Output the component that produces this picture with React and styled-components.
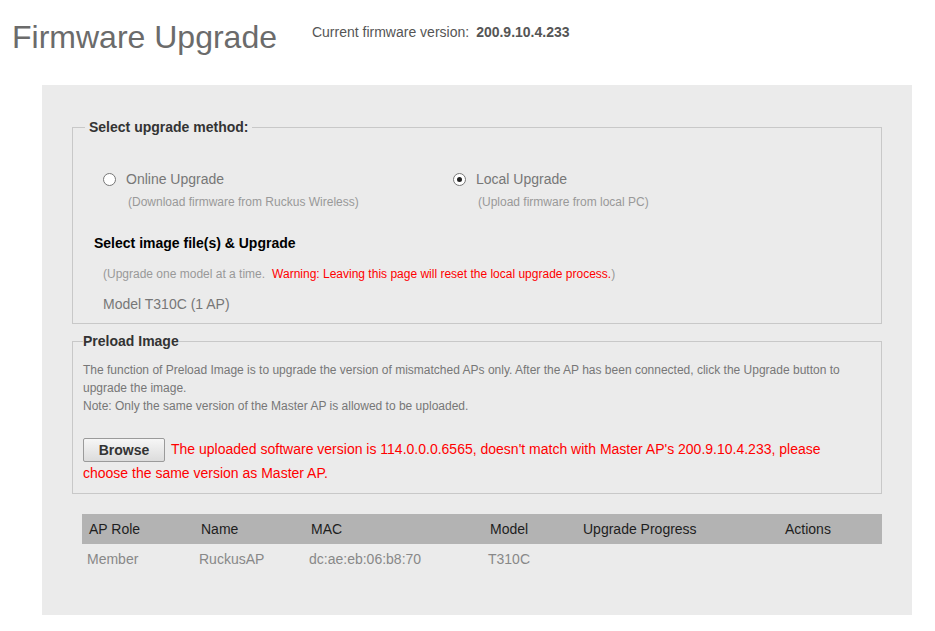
import React from 'react';
import styled, { createGlobalStyle } from 'styled-components';

const GlobalStyle = createGlobalStyle`
  html, body {
    margin: 0;
    padding: 0;
    background: #ffffff;
    font-family: "Liberation Sans", Arial, sans-serif;
  }
`;

const Page = styled.div`
  width: 935px;
`;

const Header = styled.div`
  display: flex;
  align-items: flex-start;
  height: 85px;
  box-sizing: border-box;
  padding: 19px 0 0 12px;
`;

const Title = styled.h1`
  margin: 0;
  font-size: 32px;
  line-height: 36px;
  font-weight: normal;
  color: #6b6b6b;
`;

const Version = styled.div`
  margin: 5px 0 0 35px;
  font-size: 14px;
  line-height: 16px;
  color: #555;

  b {
    margin-left: 7px;
  }
`;

const Panel = styled.div`
  margin-left: 42px;
  width: 870px;
  background: #ebebeb;
  box-sizing: border-box;
  padding: 34px 30px 41px 30px;
`;

const Group = styled.fieldset`
  margin: ${(p) => (p.$first ? '0' : '9px 0 0 0')};
  border: 1px solid #c8c8c8;
  padding: ${(p) => (p.$first ? '0 20px 11px 30px' : '0 20px 8px 10px')};
  min-width: 0;
`;

const Legend = styled.legend`
  margin-left: ${(p) => (p.$first ? '-18px' : '0')};
  padding: ${(p) => (p.$first ? '0 4px' : '0')};
  font-size: 14px;
  line-height: 16px;
  font-weight: bold;
  color: #333;
`;

const Options = styled.div`
  display: grid;
  grid-template-columns: 350px 1fr;
  margin-top: 36px;
`;

const Option = styled.div`
  display: flex;
  flex-direction: column;
`;

const OptionTop = styled.div`
  display: flex;
  align-items: center;
  height: 16px;
  font-size: 14px;
  line-height: 16px;
  color: #777;
`;

const Radio = styled.span`
  width: 11px;
  height: 11px;
  border: 1px solid #777;
  border-radius: 50%;
  background: #fff;
  margin-right: 10px;
  display: flex;
  align-items: center;
  justify-content: center;

  &::after {
    content: '';
    width: 5px;
    height: 5px;
    border-radius: 50%;
    background: ${(p) => (p.$checked ? '#222' : 'transparent')};
  }
`;

const Hint = styled.div`
  margin: 8px 0 0 25px;
  font-size: 12px;
  line-height: 14px;
  color: #999;
`;

const SubTitle = styled.div`
  margin: 26px 0 0 -9px;
  font-size: 14px;
  line-height: 16px;
  font-weight: bold;
  color: #000;
`;

const Note = styled.div`
  margin-top: 16px;
  font-size: 12px;
  line-height: 14px;
  color: #999;
`;

const Warn = styled.span`
  color: #ff0000;
  margin-left: 7px;
`;

const ModelLine = styled.div`
  margin-top: 15px;
  font-size: 14px;
  line-height: 16px;
  color: #777;
`;

const Desc = styled.div`
  margin-top: 12px;
  font-size: 12px;
  line-height: 18px;
  color: #777;
`;

const ErrorLine = styled.div`
  margin-top: 23px;
  font-size: 14px;
  line-height: 23px;
  color: #ff0000;
`;

const Browse = styled.button`
  display: inline-block;
  vertical-align: top;
  width: 82px;
  height: 24px;
  margin-right: 6px;
  padding: 0;
  border: 1px solid #9a9a9a;
  border-radius: 2px;
  background: linear-gradient(#f6f6f6, #dcdcdc);
  font-family: "Liberation Sans", Arial, sans-serif;
  font-size: 14px;
  font-weight: bold;
  color: #333;
`;

const Table = styled.div`
  margin: 20px 0 0 10px;
  width: 800px;
`;

const Row = styled.div`
  display: grid;
  grid-template-columns: 112px 110px 179px 93px 202px 104px;
  height: 30px;
  align-items: center;
  font-size: 14px;
  line-height: 16px;
  background: ${(p) => (p.$head ? '#b3b3b3' : 'transparent')};
  color: ${(p) => (p.$head ? '#1e1e1e' : '#888')};
`;

const Cell = styled.div`
  padding-left: ${(p) => (p.$head ? '7px' : '5px')};
  white-space: nowrap;
`;

const columns = ['AP Role', 'Name', 'MAC', 'Model', 'Upgrade Progress', 'Actions'];
const rows = [['Member', 'RuckusAP', 'dc:ae:eb:06:b8:70', 'T310C', '', '']];

export default function App() {
  return (
    <Page>
      <GlobalStyle />
      <Header>
        <Title>Firmware Upgrade</Title>
        <Version>
          Current firmware version:<b>200.9.10.4.233</b>
        </Version>
      </Header>
      <Panel>
        <Group $first>
          <Legend $first>Select upgrade method:</Legend>
          <Options>
            <Option>
              <OptionTop>
                <Radio />
                Online Upgrade
              </OptionTop>
              <Hint>(Download firmware from Ruckus Wireless)</Hint>
            </Option>
            <Option>
              <OptionTop>
                <Radio $checked />
                Local Upgrade
              </OptionTop>
              <Hint>(Upload firmware from local PC)</Hint>
            </Option>
          </Options>
          <SubTitle>Select image file(s) &amp; Upgrade</SubTitle>
          <Note>
            (Upgrade one model at a time.
            <Warn>Warning: Leaving this page will reset the local upgrade process.</Warn>)
          </Note>
          <ModelLine>Model T310C (1 AP)</ModelLine>
        </Group>
        <Group>
          <Legend>Preload Image</Legend>
          <Desc>
            The function of Preload Image is to upgrade the version of mismatched APs only. After the AP has been connected, click the Upgrade button to upgrade the image.
            <br />
            Note: Only the same version of the Master AP is allowed to be uploaded.
          </Desc>
          <ErrorLine>
            <Browse>Browse</Browse>
            The uploaded software version is 114.0.0.0.6565, doesn't match with Master AP's 200.9.10.4.233, please choose the same version as Master AP.
          </ErrorLine>
        </Group>
        <Table>
          <Row $head>
            {columns.map((c) => (
              <Cell $head key={c}>{c}</Cell>
            ))}
          </Row>
          {rows.map((r, i) => (
            <Row key={i}>
              {r.map((v, j) => (
                <Cell key={j}>{v}</Cell>
              ))}
            </Row>
          ))}
        </Table>
      </Panel>
    </Page>
  );
}
